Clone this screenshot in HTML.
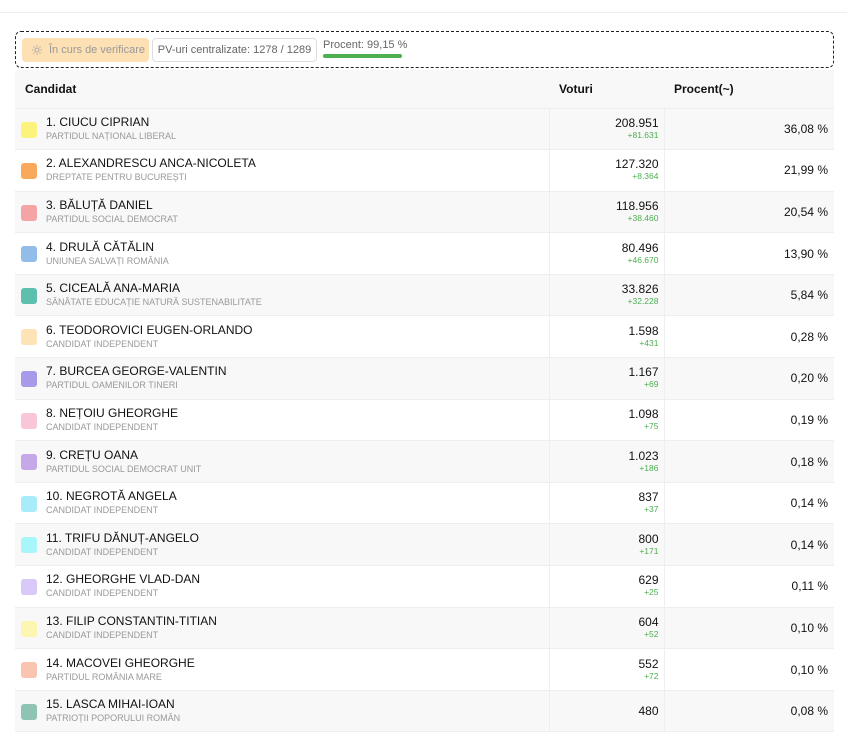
<!DOCTYPE html>
<html><head><meta charset="utf-8"><style>
*{box-sizing:border-box;margin:0;padding:0}
body{width:847px;height:740px;background:#fff;font-family:"Liberation Sans",sans-serif;color:#111;overflow:hidden;position:relative}
.topline{position:absolute;top:12px;left:0;width:847px;height:1px;background:#eee}
.bar{position:absolute;left:15px;top:31px;width:819px;height:37px;border:1px dashed #222;border-radius:6px}
.chip1{position:absolute;left:6px;top:6px;width:127px;height:24px;background:#fde0b3;border-radius:4px;color:#999;font-size:11px;line-height:24px;padding-left:27px}
.chip1 svg{position:absolute;left:9px;top:6px}
.chip2{position:absolute;left:136px;top:6px;width:165px;height:24px;border:1px solid #ddd;border-radius:4px;color:#666;font-size:11px;line-height:22px;text-align:center}
.pc{position:absolute;left:307px;top:7px;font-size:11px;color:#666}
.pbar{position:absolute;left:307px;top:22px;width:79px;height:4px;background:#4caf50;border-radius:2px}
table{position:absolute;left:15px;top:70px;width:819px;border-collapse:collapse}
th{height:38px;background:#f8f8f8;font-size:12px;font-weight:bold;text-align:left;border-bottom:1px solid #eee}
td{height:41.6px;border-bottom:1px solid #eee;vertical-align:middle}
tr.g td{background:#f8f8f8}
td.c{position:relative;padding-left:31px}
.sq{position:absolute;left:6px;top:13px;width:16px;height:16px;border-radius:3px}
.n{font-size:12px;color:#111;line-height:14px}
.p{font-size:9px;color:#999;line-height:13px;margin-top:1px}
td.v{width:115px;border-left:1px solid #eee;border-right:1px solid #eee;text-align:right;padding-right:5px}
.vn{font-size:12px;line-height:13px}
.vd{font-size:8.5px;color:#4caf50;line-height:11px}
td.r{width:170px;text-align:right;padding-right:6px;font-size:12px}
</style></head><body>
<div class="topline"></div>
<div class="bar">
<div class="chip1"><svg width="12" height="12" viewBox="0 0 12 12" fill="none" stroke="#aaa" stroke-width="1"><circle cx="6" cy="6" r="2"/><path d="M6 1v1.5M6 9.5V11M1 6h1.5M9.5 6H11M2.5 2.5l1 1M8.5 8.5l1 1M2.5 9.5l1-1M8.5 3.5l1-1"/></svg>În curs de verificare</div>
<div class="chip2">PV-uri centralizate: 1278 / 1289</div>
<div class="pc">Procent: 99,15 %</div>
<div class="pbar"></div>
</div>
<table>
<tr><th style="padding-left:10px">Candidat</th><th style="padding-left:10px">Voturi</th><th style="padding-left:10px">Procent(~)</th></tr>
<tr class="g"><td class="c"><div class="sq" style="background:#fcf37c"></div><div class="n">1. CIUCU CIPRIAN</div><div class="p">PARTIDUL NAȚIONAL LIBERAL</div></td><td class="v"><div class="vn">208.951</div><div class="vd">+81.631</div></td><td class="r">36,08 %</td></tr>
<tr><td class="c"><div class="sq" style="background:#f9a95c"></div><div class="n">2. ALEXANDRESCU ANCA-NICOLETA</div><div class="p">DREPTATE PENTRU BUCUREȘTI</div></td><td class="v"><div class="vn">127.320</div><div class="vd">+8.364</div></td><td class="r">21,99 %</td></tr>
<tr class="g"><td class="c"><div class="sq" style="background:#f4a4a4"></div><div class="n">3. BĂLUȚĂ DANIEL</div><div class="p">PARTIDUL SOCIAL DEMOCRAT</div></td><td class="v"><div class="vn">118.956</div><div class="vd">+38.460</div></td><td class="r">20,54 %</td></tr>
<tr><td class="c"><div class="sq" style="background:#92bde9"></div><div class="n">4. DRULĂ CĂTĂLIN</div><div class="p">UNIUNEA SALVAȚI ROMÂNIA</div></td><td class="v"><div class="vn">80.496</div><div class="vd">+46.670</div></td><td class="r">13,90 %</td></tr>
<tr class="g"><td class="c"><div class="sq" style="background:#5fbfaf"></div><div class="n">5. CICEALĂ ANA-MARIA</div><div class="p">SĂNĂTATE EDUCAȚIE NATURĂ SUSTENABILITATE</div></td><td class="v"><div class="vn">33.826</div><div class="vd">+32.228</div></td><td class="r">5,84 %</td></tr>
<tr><td class="c"><div class="sq" style="background:#fde3b5"></div><div class="n">6. TEODOROVICI EUGEN-ORLANDO</div><div class="p">CANDIDAT INDEPENDENT</div></td><td class="v"><div class="vn">1.598</div><div class="vd">+431</div></td><td class="r">0,28 %</td></tr>
<tr class="g"><td class="c"><div class="sq" style="background:#a89ae9"></div><div class="n">7. BURCEA GEORGE-VALENTIN</div><div class="p">PARTIDUL OAMENILOR TINERI</div></td><td class="v"><div class="vn">1.167</div><div class="vd">+69</div></td><td class="r">0,20 %</td></tr>
<tr><td class="c"><div class="sq" style="background:#f9c5d9"></div><div class="n">8. NEȚOIU GHEORGHE</div><div class="p">CANDIDAT INDEPENDENT</div></td><td class="v"><div class="vn">1.098</div><div class="vd">+75</div></td><td class="r">0,19 %</td></tr>
<tr class="g"><td class="c"><div class="sq" style="background:#c5a8e8"></div><div class="n">9. CREȚU OANA</div><div class="p">PARTIDUL SOCIAL DEMOCRAT UNIT</div></td><td class="v"><div class="vn">1.023</div><div class="vd">+186</div></td><td class="r">0,18 %</td></tr>
<tr><td class="c"><div class="sq" style="background:#a8ecf9"></div><div class="n">10. NEGROTĂ ANGELA</div><div class="p">CANDIDAT INDEPENDENT</div></td><td class="v"><div class="vn">837</div><div class="vd">+37</div></td><td class="r">0,14 %</td></tr>
<tr class="g"><td class="c"><div class="sq" style="background:#a8f6fa"></div><div class="n">11. TRIFU DĂNUȚ-ANGELO</div><div class="p">CANDIDAT INDEPENDENT</div></td><td class="v"><div class="vn">800</div><div class="vd">+171</div></td><td class="r">0,14 %</td></tr>
<tr><td class="c"><div class="sq" style="background:#d9c9f8"></div><div class="n">12. GHEORGHE VLAD-DAN</div><div class="p">CANDIDAT INDEPENDENT</div></td><td class="v"><div class="vn">629</div><div class="vd">+25</div></td><td class="r">0,11 %</td></tr>
<tr class="g"><td class="c"><div class="sq" style="background:#fdf6b3"></div><div class="n">13. FILIP CONSTANTIN-TITIAN</div><div class="p">CANDIDAT INDEPENDENT</div></td><td class="v"><div class="vn">604</div><div class="vd">+52</div></td><td class="r">0,10 %</td></tr>
<tr><td class="c"><div class="sq" style="background:#f9c4b0"></div><div class="n">14. MACOVEI GHEORGHE</div><div class="p">PARTIDUL ROMÂNIA MARE</div></td><td class="v"><div class="vn">552</div><div class="vd">+72</div></td><td class="r">0,10 %</td></tr>
<tr class="g"><td class="c"><div class="sq" style="background:#8fc3b3"></div><div class="n">15. LASCA MIHAI-IOAN</div><div class="p">PATRIOȚII POPORULUI ROMÂN</div></td><td class="v"><div class="vn">480</div></td><td class="r">0,08 %</td></tr>
</table>
</body></html>
